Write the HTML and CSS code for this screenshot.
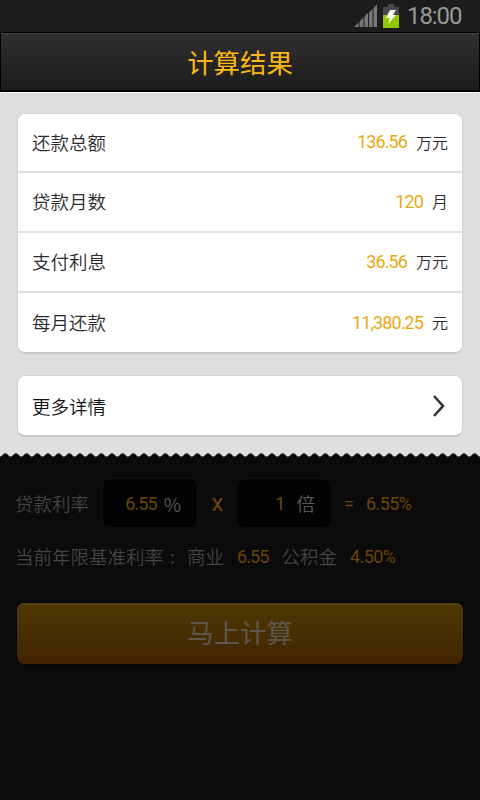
FILE: index.html
```html
<!DOCTYPE html>
<html lang="zh-CN">
<head>
<meta charset="utf-8">
<title>计算结果</title>
<link rel="stylesheet" href="styles.css">
</head>
<body>
<div class="status">
  <svg class="signal" width="24" height="24" viewBox="0 0 24 24"><path d="M0 23L4.600 18.400V23ZM5.600 17.400L9.400 13.600V23H5.600ZM10.400 12.600L14 9V23H10.400ZM15 8.500L18.500 5V23H15ZM19.500 4L23 .5V23H19.500Z" fill="#777"/></svg>
  <svg class="battery" width="16" height="24" viewBox="0 0 16 24"><path d="M5 0H11V3H16V24H0V3H5Z" fill="#484848"/><path d="M0 11H16V24H0Z" fill="#91c800"/><path d="M7 6H13L10 11H13L5 20L7 14H3Z" fill="#fff"/></svg>
  <span class="clock">18:00</span>
</div>
<header class="header"><h1>计算结果</h1></header>
<main class="results">
  <section class="card">
    <div class="row"><span>还款总额</span><span class="num">136.56</span><span class="unit">万元</span></div>
    <div class="row"><span>贷款月数</span><span class="num">120</span><span class="unit">月</span></div>
    <div class="row"><span>支付利息</span><span class="num">36.56</span><span class="unit">万元</span></div>
    <div class="row"><span>每月还款</span><span class="num">11,380.25</span><span class="unit">元</span></div>
  </section>
  <section class="card more">
    <div class="row"><span>更多详情</span><svg class="chevron" width="14" height="24" viewBox="0 0 14 24"><path d="M2 2L11 12L2 22" fill="none" stroke="#333" stroke-width="2.600"/></svg></div>
  </section>
</main>
<svg class="torn" width="480" height="6">
  <defs><pattern id="wave" width="10.667" height="6" patternUnits="userSpaceOnUse"><path d="M0 3.500C2.200 3.500 3 .2 5.333 .2S8.400 3.500 10.667 3.500V6H0Z" fill="#0b0b0b"/></pattern></defs>
  <rect width="480" height="6" fill="url(#wave)"/>
</svg>
<section class="form">
  <div class="line rate">
    <span class="label">贷款利率</span>
    <span class="field"><span class="num">6.55</span><span class="suffix percent">%</span></span>
    <span class="num times">x</span>
    <span class="field"><span class="num">1</span><span class="suffix">倍</span></span>
    <span class="num equals">=</span>
    <span class="num">6.55%</span>
  </div>
  <div class="line base">
    <span class="label current">当前年限基准利率<span class="colon">:</span></span><span class="label biz">商业</span><span class="num">6.55</span><span class="label fund">公积金</span><span class="num">4.50%</span>
  </div>
  <button class="submit">马上计算</button>
</section>
</body>
</html>
```
FILE: styles.css
```css
* { box-sizing: border-box; }
body {
  margin: 0;
  width: 480px;
  height: 800px;
  overflow: hidden;
  background: #0b0b0b;
  font-family: "Noto Sans CJK SC", sans-serif;
  font-weight: 350;
  font-size: 18.500px;
}
.status {
  height: 32px;
  background: #1c1c1c;
  display: flex;
  align-items: center;
  justify-content: flex-end;
  padding-right: 19px;
}
.battery { margin: 0 8px 0 5px; }
.clock {
  font: 400 24px/32px Roboto, sans-serif;
  color: #999;
  width: 54px;
  letter-spacing: -1.100px;
  white-space: nowrap;
}
.header {
  height: 60px;
  border: 1px solid #000;
  border-bottom-width: 2px;
  background: linear-gradient(#2f2f2f, #1d1d1d);
  box-shadow: inset 0 1px #444;
  text-align: center;
}
.header h1 {
  margin: 0;
  font-size: 26.400px;
  line-height: 57px;
  font-weight: 400;
  color: #fcb814;
}
.results {
  height: 361px;
  padding: 20px 17px 0;
  border-top: 1px solid #fafafa;
  background: #dedede;
}
.card {
  border: 1px solid #d2d2d2;
  border-bottom: 2px solid #c8c8c8;
  border-radius: 8px;
  background: #fff;
  overflow: hidden;
}
.more { margin-top: 21px; }
.row {
  height: 60px;
  padding: 0 14px 2px;
  display: flex;
  align-items: center;
  color: #2b2b2b;
}
.card .row:first-child { height: 57px; padding-bottom: 2px; }
.row + .row { border-top: 2px solid #e2e2e2; }
.card .row:last-child { height: 61px; padding-bottom: 1px; }
.card.more .row { height: 59px; padding-bottom: 0; color: #111; }
.row .num { margin-left: auto; }
.num {
  font-family: Roboto, sans-serif;
  font-weight: 400;
  font-size: 18px;
  letter-spacing: -.9px;
  color: #e9a914;
}
.unit { margin-left: 9px; font-size: 16px; }
.chevron { margin: 0 2px 0 auto; }
.torn { display: block; background: #dedede; }
.form { padding: 19px 17px; color: #444; }
.form .num { color: #694508; }
.line { display: flex; align-items: center; margin-left: -2px; }
.rate { height: 50px; }
.rate .label { width: 87px; }
.field {
  width: 96px;
  height: 50px;
  padding-right: 16px;
  border: 1px solid #101010;
  border-radius: 8px;
  background: #030303;
  display: flex;
  align-items: center;
  justify-content: flex-end;
}
.suffix { margin-left: 12px; color: #5a5a5a; }
.percent { margin-left: 7px; font-size: 19px; }
.times { width: 38px; text-align: center; }
.form .times { font-size: 24px; }
.equals { width: 34px; padding-left: 12px; }
.form .num:last-child { letter-spacing: -.6px; }
.base { height: 30px; margin-top: 13px; white-space: nowrap; }
.current { width: 166px; }
.colon { margin-left: 7px; }
.biz { margin: 0 13px 0 6px; }
.fund { margin: 0 13px; }
.submit {
  display: block;
  width: 446px;
  height: 61px;
  margin-top: 32px;
  padding: 0 0 3px;
  border: 0;
  border-radius: 7px;
  background: linear-gradient(#4f3904, #402400);
  box-shadow: inset 0 2px #56400b, 0 0 0 1px #050505;
  font: 400 26.400px/58px "Noto Sans CJK SC", sans-serif;
  color: #5d564d;
}
```
